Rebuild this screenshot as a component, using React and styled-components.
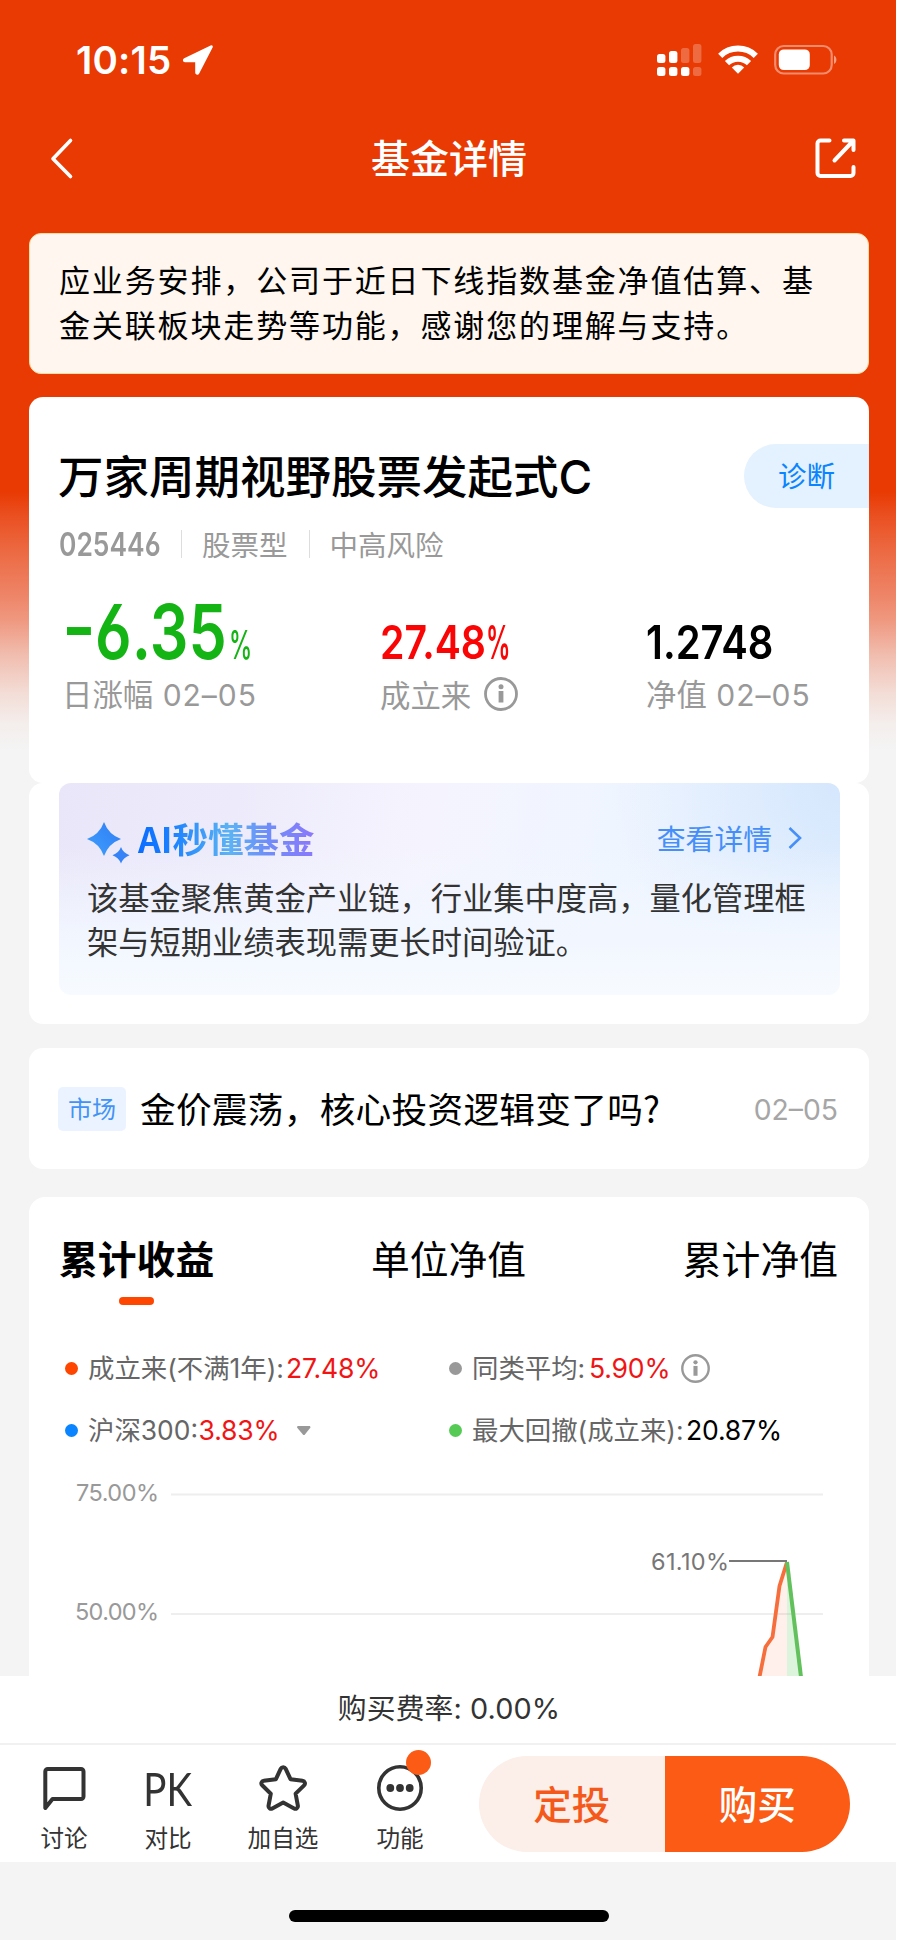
import React from "react";
import styled, { createGlobalStyle } from "styled-components";

const Global = createGlobalStyle`
  *, *::before, *::after { box-sizing: border-box; }
  html, body { margin: 0; padding: 0; background: #fff; }
  body { font-family: Inter, "Noto Sans CJK SC", sans-serif; color: #000; -webkit-font-smoothing: antialiased; }
  button { font: inherit; border: 0; padding: 0; background: none; color: inherit; }
  svg { display: block; flex: none; }
`;

const cjk = `"Noto Sans CJK SC", sans-serif`;

const Screen = styled.div`
  width: 896px;
  height: 1940px;
  overflow: hidden;
  display: flex;
  flex-direction: column;
  background: linear-gradient(
      to bottom,
      #e93a03 0, #e93a03 492px, #ea4f20 515px, #ec6a43 552px, #ee8568 596px,
      #ef9a82 622px, #f1beb0 656px, #f3dcd5 692px, #f4eeec 724px, #f4f4f4 750px
    ) #f4f4f4;
`;

const StatusBar = styled.div`
  height: 118px;
  flex: none;
  display: flex;
  justify-content: space-between;
  align-items: flex-start;
  padding: 44px 59px 0 76px;
`;
const Clock = styled.div`
  display: flex;
  align-items: center;
  gap: 11px;
  height: 32px;
  color: #fff;
  font-size: 38.5px;
  line-height: 32px;
  font-weight: 600;
  letter-spacing: 0.2px;
`;
const StatusIcons = styled.div`
  display: flex;
  gap: 16px;
`;

const NavBar = styled.header`
  height: 115px;
  flex: none;
  display: flex;
  justify-content: space-between;
  align-items: flex-start;
  padding: 18px 39px 0 49px;
  color: #fff;
`;
const NavTitle = styled.h1`
  margin: -2px 0 0 8px;
  font: 500 39px/44px ${cjk};
`;

const Notice = styled.p`
  margin: 0 27px 23px 29px;
  height: 141px;
  flex: none;
  padding: 22px 20px 0 29px;
  background: #fef6ef;
  border: 1px solid #fbdc9c;
  border-radius: 12px;
  font: 400 31px/45px ${cjk};
  letter-spacing: 1.86px;
  white-space: nowrap;
`;

const Card = styled.section`
  margin: 0 27px ${(p) => p.$gap || 0}px 29px;
  height: ${(p) => p.$h}px;
  flex: none;
  background: #fff;
  border-radius: ${(p) => p.$r || 14}px;
`;

const FundHead = styled.div`
  display: flex;
  justify-content: space-between;
  padding: 47px 0 0 29px;
`;
const FundName = styled.h2`
  margin: 0 0 3px;
  font: 500 45.5px/60px ${cjk};
  span { font-family: Inter, sans-serif; font-size: 46px; margin-left: 0; }
`;
const Diagnose = styled.button`
  width: 125px;
  height: 64px;
  padding-right: 0;
  border-radius: 32px 0 0 32px;
  background: #e4f1fe;
  color: #0a84ff;
  font: 400 28.5px/59px ${cjk};
  padding-bottom: 3px;
`;
const Meta = styled.div`
  display: flex;
  align-items: center;
  height: 36px;
  margin-top: 16px;
  padding-left: 30px;
  color: #999;
  font: 400 28.5px/36px ${cjk};
`;
const Rule = styled.i`
  width: 1px;
  height: 28px;
  background: #ddd;
  margin: 0 20px 0 ${(p) => p.$left}px;
`;

/* Condensed numerals: a fixed-width slot around horizontally narrowed digits. */
const NumSlot = styled.span`
  display: inline-block;
  width: ${(p) => p.$w}px;
  white-space: nowrap;
  line-height: 1;
`;
const NumText = styled.span`
  display: inline-block;
  transform: scaleX(${(p) => p.$x || 0.8});
  transform-origin: 0 50%;
  font-family: Inter, sans-serif;
  font-size: ${(p) => p.$size}px;
  font-weight: ${(p) => p.$weight || 600};
  line-height: 1;
  font-feature-settings: "cv03", "cv04", "case";
`;
const Minus = styled.span`
  display: inline-block;
  transform: scaleX(1.2);
  transform-origin: 0 50%;
  margin-right: 6px;
`;
const Num = ({ w, children, ...rest }) => (
  <NumSlot $w={w}>
    <NumText {...rest}>{children}</NumText>
  </NumSlot>
);

const Stats = styled.div`
  display: flex;
  padding-left: 33px;
  margin-top: 31px;
`;
const Stat = styled.div`
  width: ${(p) => p.$w}px;
  color: ${(p) => p.$c};
`;
const StatValue = styled.div`
  height: 81px;
  display: flex;
  align-items: baseline;
  &::before { content: ""; height: 66px; }
`;
const StatLabel = styled.div`
  display: flex;
  align-items: center;
  gap: 13px;
  height: 40px;
  color: #999;
  font-size: 30px;
  line-height: 40px;
  white-space: pre;
  letter-spacing: 1px;
  b { font: 400 30.4px/40px ${cjk}; letter-spacing: 0; }
`;

const AiBox = styled.div`
  margin: 0 29px 0 30px;
  height: 212px;
  padding: 33px 20px 0 28px;
  border-radius: 12px;
  background:
    linear-gradient(to bottom, rgba(246,250,255,0) 30%, #f2f7ff 75%, #f7fbff 100%),
    radial-gradient(circle at 100% 0, #d5e7fd 0, rgba(230,240,254,0) 230px),
    linear-gradient(100deg, #e9e6f9 0, #edebfb 22%, #f5f4fe 46%, #eff5ff 68%, #ebf3ff 100%);
`;
const AiHead = styled.div`
  display: flex;
  align-items: center;
  height: 44px;
`;
const Spark = styled.svg`
  width: 43px;
  height: 46px;
  margin-top: 6px;
`;
const AiTitle = styled.h3`
  margin: 0 0 0 8px;
  font: 700 35.5px/44px ${cjk};
  color: transparent;
  background: linear-gradient(90deg, #0a6cff 0, #1c83ff 20%, #5cb3f3 52%, #6f8df8 74%, #8b78fb 100%);
  background-clip: text;
  -webkit-background-clip: text;
`;
const AiMore = styled.span`
  display: flex;
  align-items: center;
  gap: 16px;
  margin-left: auto;
  margin-right: 17px;
  color: #468ff8;
  font: 400 28.8px/40px ${cjk};
`;
const AiText = styled.p`
  margin: 15px 0 0;
  color: #333;
  font: 400 31.25px/44px ${cjk};
  white-space: nowrap;
`;

const News = styled.div`
  height: 121px;
  display: flex;
  align-items: center;
  padding: 0 31px 0 29px;
`;
const Tag = styled.span`
  width: 68px;
  height: 44px;
  border-radius: 5px;
  background: #eaf3ff;
  color: #4393f5;
  text-align: center;
  font: 400 24px/42px ${cjk};
`;
const NewsTitle = styled.span`
  margin: -1px 0 0 14px;
  font: 400 35.7px/50px ${cjk};
  letter-spacing: 0.25px;
`;
const NewsDate = styled.span`
  margin: 3px 0 0 auto;
  color: #a6a6a6;
  font-size: 28.3px;
`;

const Tabs = styled.nav`
  display: flex;
  justify-content: space-between;
  padding: 33px 31px 0 30px;
`;
const Tab = styled.button`
  height: 77px;
  display: flex;
  flex-direction: column;
  align-items: center;
  font: ${(p) => (p.$on ? 700 : 400)} 38.8px/54px ${cjk};
  &::after {
    content: "";
    width: 35px;
    height: 8px;
    margin-top: 13px;
    border-radius: 4px;
    background: ${(p) => (p.$on ? "#ff4600" : "transparent")};
  }
`;
const Legend = styled.div`
  display: grid;
  grid-template-columns: 384px 1fr;
  grid-auto-rows: 62px;
  padding: 30px 0 0 36px;
`;
const LegendItem = styled.div`
  display: flex;
  align-items: center;
  white-space: nowrap;
`;
const Dot = styled.i`
  width: 13px;
  height: 13px;
  border-radius: 50%;
  background: ${(p) => p.$c};
  margin-right: 10px;
`;
const LegendLabel = styled.span`
  width: ${(p) => p.$w}px;
  color: #666;
  font: 400 26.4px/40px Inter, ${cjk};
`;
const LegendValue = styled.span`
  color: ${(p) => p.$c || "#f01414"};
  font-size: 26.6px;
  line-height: 40px;
  letter-spacing: -0.2px;
`;
const Caret = styled.svg`
  width: 14px;
  height: 10px;
  margin: 2px 0 0 18px;
`;
const InfoSlot = styled.span`
  margin-left: 11px;
`;
const Chart = styled.svg`
  width: 840px;
  height: 215px;
  text { font-family: Inter, sans-serif; font-size: 23.5px; }
`;

const Fee = styled.div`
  height: 67px;
  flex: none;
  display: flex;
  justify-content: center;
  padding: 12px 0 0 2px;
  background: #fff;
  color: #333;
  font: 400 28.8px/42px Inter, ${cjk};
  letter-spacing: 0.1px;
  white-space: pre;
`;
const ActionBar = styled.footer`
  height: 119px;
  flex: none;
  display: flex;
  padding: 13px 46px 0 23px;
  background: #fff;
  border-top: 2px solid #f1f1f2;
`;
const Tool = styled.button`
  width: ${(p) => p.$w}px;
  display: flex;
  flex-direction: column;
  align-items: center;
  justify-content: flex-start;
  height: 100px;
  color: #333;
  font: 400 23.6px/34px ${cjk};
`;
const ToolIcon = styled.span`
  position: relative;
  width: 50px;
  height: 62px;
  padding-top: 5px;
  display: flex;
  justify-content: center;
`;
const PkMark = styled.span`
  font: 400 47px/50px Lato, sans-serif;
  transform: scaleX(0.82);
`;
const Badge = styled.i`
  position: absolute;
  right: -6px;
  top: -8px;
  width: 25px;
  height: 25px;
  border-radius: 50%;
  background: #fb5b14;
`;
const BuyGroup = styled.div`
  display: flex;
  margin: -2px 0 0 auto;
  width: 371px;
  height: 96px;
  border-radius: 48px;
  overflow: hidden;
`;
const BuyButton = styled.button`
  flex: 1;
  padding-bottom: 4px;
  background: ${(p) => (p.$solid ? "#fb5b14" : "#fceee8")};
  color: ${(p) => (p.$solid ? "#fff" : "#f4581a")};
  font: 500 38.5px/92px ${cjk};
`;
const HomeArea = styled.div`
  flex: 1;
  display: flex;
  justify-content: center;
  padding: 48px 0 0 2px;
  background: #f4f4f4;
`;
const HomeBar = styled.i`
  width: 320px;
  height: 12px;
  border-radius: 6px;
  background: #000;
`;

const Info = ({ size }) => (
  <svg width={size} height={size} viewBox="0 0 34 34" fill="none" stroke="#999">
    <circle cx="17" cy="17" r="15.500" strokeWidth="2.800" />
    <path d="M17 14v11.500" strokeWidth="4.800" />
    <circle cx="17" cy="9.800" r="2.500" fill="#999" stroke="none" />
  </svg>
);

const signal = [
  [0, 10, 9, 1], [12, 7, 12, 1], [24, 4, 15, 0.25], [36, 0, 19, 0.25],
  [0, 23, 9, 1], [12, 23, 9, 1], [24, 23, 9, 1], [36, 23, 9, 0.25],
];

export default function App() {
  return (
    <>
      <Global />
      <Screen>
        <StatusBar>
          <Clock>
            10:15
            <svg width="32" height="32" viewBox="0 0 32 32">
              <path d="M28.600 1.400 2.200 14.200C.2 15.300.8 18.200 3 18.200H13.200V28.600C13.200 31 16.200 31.600 17.200 29.500L30.600 3.600C31.400 2 30.200.6 28.600 1.400Z" fill="#fff" />
            </svg>
          </Clock>
          <StatusIcons>
            <svg width="45" height="32" viewBox="0 0 45 32" fill="#fff">
              {signal.map(([x, y, h, o], i) => (
                <rect key={i} x={x} y={y} width="8.400" height={h} rx="2.500" opacity={o} />
              ))}
            </svg>
            <svg width="40" height="32" viewBox="0 0 40 32" fill="none" stroke="#fff" strokeWidth="6">
              <path d="M2.200 11.800a25.500 25.500 0 0 1 35.600 0" />
              <path d="M9 19.200a15.600 15.600 0 0 1 22 0" />
              <path d="M20 29.800l-6.200-6.400a8.800 8.800 0 0 1 12.400 0z" fill="#fff" stroke="none" />
            </svg>
            <svg width="63" height="32" viewBox="0 0 63 32">
              <rect x="1.200" y="2" width="56.500" height="27.500" rx="8.500" fill="none" stroke="#fff" strokeOpacity=".42" strokeWidth="2.200" />
              <rect x="4.800" y="5.400" width="31" height="20.700" rx="5" fill="#fff" />
              <path d="M60 11.500c3.200 1.500 3.200 7 0 8.500z" fill="#fff" fillOpacity=".5" />
            </svg>
          </StatusIcons>
        </StatusBar>

        <NavBar>
          <svg width="26" height="46" viewBox="0 0 26 46" fill="none" stroke="#fff" strokeWidth="3.600" strokeLinecap="round" strokeLinejoin="round">
            <path d="M21.500 4.500 4 22.700 21.500 40.500" />
          </svg>
          <NavTitle>基金详情</NavTitle>
          <svg width="42" height="46" viewBox="0 0 42 46" fill="none" stroke="#fff" strokeWidth="4" strokeLinecap="round" strokeLinejoin="round">
            <path d="M14.500 4.500H5.500a3 3 0 0 0-3 3V37a3 3 0 0 0 3 3H35.500a3 3 0 0 0 3-3V31" />
            <path d="M19.500 24.500 38 5M29 4.500H38.500V14" />
          </svg>
        </NavBar>

        <Notice>
          应业务安排，公司于近日下线指数基金净值估算、基
          <br />
          金关联板块走势等功能，感谢您的理解与支持。
        </Notice>

        <Card $h={386}>
          <FundHead>
            <FundName>万家周期视野股票发起式<span>C</span></FundName>
            <Diagnose>诊断</Diagnose>
          </FundHead>
          <Meta>
            <Num w={100} $size={33} $x={0.8}>025446</Num>
            <Rule $left={22} />
            股票型
            <Rule $left={21} />
            中高风险
          </Meta>
          <Stats>
            <Stat $w={318} $c="#14b414">
              <StatValue>
                <Num w={167} $size={76} $x={0.8}><Minus>-</Minus>6.35</Num>
                <Num w={24} $size={39} $x={0.6} $weight={500}>%</Num>
              </StatValue>
              <StatLabel><span><b>日涨幅</b> 02–05</span></StatLabel>
            </Stat>
            <Stat $w={266} $c="#fa0505">
              <StatValue>
                <Num w={106} $size={47} $x={0.835}>27.48</Num>
                <Num w={24} $size={47} $x={0.52}>%</Num>
              </StatValue>
              <StatLabel><b>成立来</b><Info size={34} /></StatLabel>
            </Stat>
            <Stat $w={180} $c="#000">
              <StatValue><Num w={128} $size={47} $x={0.85}>1.2748</Num></StatValue>
              <StatLabel><span><b>净值</b> 02–05</span></StatLabel>
            </Stat>
          </Stats>
        </Card>

        <Card $h={241} $gap={24}>
          <AiBox>
            <AiHead>
              <Spark viewBox="0 0 43 46">
                <defs>
                  <linearGradient id="spark" x1="1" y1="0" x2="0" y2="1">
                    <stop offset="0" stopColor="#2f7cf6" />
                    <stop offset="1" stopColor="#3fa0fb" />
                  </linearGradient>
                </defs>
                <path d="M17 4Q21.500 16.500 34 21Q21.500 25.500 17 38Q12.500 25.500 0 21Q12.500 16.500 17 4Z" fill="url(#spark)" />
                <path d="M34 29Q36.200 35 42.500 37.200Q36.200 39.500 34 45.500Q31.800 39.500 25.500 37.200Q31.800 35 34 29Z" fill="#3583f6" />
              </Spark>
              <AiTitle>AI秒懂基金</AiTitle>
              <AiMore>
                查看详情
                <svg width="15" height="24" viewBox="0 0 15 24" fill="none" stroke="#468ff8" strokeWidth="2.600">
                  <path d="M1.500 2 12 12 1.500 22" />
                </svg>
              </AiMore>
            </AiHead>
            <AiText>
              该基金聚焦黄金产业链，行业集中度高，量化管理框
              <br />
              架与短期业绩表现需更长时间验证。
            </AiText>
          </AiBox>
        </Card>

        <Card $h={121} $gap={28}>
          <News>
            <Tag>市场</Tag>
            <NewsTitle>金价震荡，核心投资逻辑变了吗?</NewsTitle>
            <NewsDate>02–05</NewsDate>
          </News>
        </Card>

        <Card $h={479} $r="16px 16px 0 0 / 16">
          <Tabs>
            <Tab $on>累计收益</Tab>
            <Tab>单位净值</Tab>
            <Tab>累计净值</Tab>
          </Tabs>
          <Legend>
            <LegendItem>
              <Dot $c="#ff4600" />
              <LegendLabel $w={198}>成立来(不满1年):</LegendLabel>
              <LegendValue>27.48%</LegendValue>
            </LegendItem>
            <LegendItem>
              <Dot $c="#999" />
              <LegendLabel $w={117}>同类平均:</LegendLabel>
              <LegendValue>5.90%</LegendValue>
              <InfoSlot><Info size={29} /></InfoSlot>
            </LegendItem>
            <LegendItem>
              <Dot $c="#0a84ff" />
              <LegendLabel $w={110.5}>沪深300:</LegendLabel>
              <LegendValue>3.83%</LegendValue>
              <Caret viewBox="18 0 14 10">
                <path d="M18.500 0H31L31.500 1.500 25.500 9H24.300L18 1.500Z" fill="#999" />
              </Caret>
            </LegendItem>
            <LegendItem>
              <Dot $c="#55cb55" />
              <LegendLabel $w={214}>最大回撤(成立来):</LegendLabel>
              <LegendValue $c="#000">20.87%</LegendValue>
            </LegendItem>
          </Legend>
          <Chart viewBox="29 1461 840 215">
            <path d="M171 1494.500H823M171 1614H823" stroke="#eee" strokeWidth="2" />
            <path d="M759.500 1677 765.500 1647 772.500 1637 779.500 1586 787 1562V1677Z" fill="#fa5a1e" fillOpacity=".09" />
            <path d="M787 1562 801 1677H787Z" fill="#50c850" fillOpacity=".2" />
            <path d="M759.500 1677 765.500 1647 772.500 1637 779.500 1586 787 1562" fill="none" stroke="#f56e3c" strokeWidth="3.800" strokeLinejoin="round" />
            <path d="M787 1562 801 1677" stroke="#62c15c" strokeWidth="4" />
            <path d="M729 1561H787" stroke="#777" strokeWidth="2" />
            <text x="76" y="1501" textLength="83" fill="#999">75.00%</text>
            <text x="75" y="1620" textLength="84" fill="#999">50.00%</text>
            <text x="651" y="1570" textLength="78" fill="#777">61.10%</text>
          </Chart>
        </Card>

        <Fee>购买费率: 0.00%</Fee>

        <ActionBar>
          <Tool $w={82}>
            <ToolIcon>
              <svg width="50" height="50" viewBox="0 0 50 50" fill="none" stroke="#333" strokeWidth="4" strokeLinejoin="round">
                <path d="M6.300 45V8.500a2.500 2.500 0 0 1 2.500-2.500H42a2.500 2.500 0 0 1 2.500 2.500V33.500a2.500 2.500 0 0 1-2.500 2.500H13.500L6.300 45Z" />
              </svg>
            </ToolIcon>
            讨论
          </Tool>
          <Tool $w={126}>
            <ToolIcon><PkMark>PK</PkMark></ToolIcon>
            对比
          </Tool>
          <Tool $w={104}>
            <ToolIcon>
              <svg width="50" height="50" viewBox="0 0 50 50" fill="none" stroke="#333" strokeWidth="4" strokeLinejoin="round">
                <path d="M22.800 5.600a2.700 2.700 0 0 1 4.800 0L32.500 16.200 44.600 17.800a2.600 2.600 0 0 1 1.500 4.500L37.600 30.700 39.900 42.900a2.600 2.600 0 0 1-3.800 2.600L25.200 39.600 14.300 45.500a2.600 2.600 0 0 1-3.800-2.600L12.800 30.700 4.200 22.300a2.600 2.600 0 0 1 1.500-4.500L17.900 16.200Z" />
              </svg>
            </ToolIcon>
            加自选
          </Tool>
          <Tool $w={130}>
            <ToolIcon>
              <svg width="50" height="50" viewBox="0 0 50 50">
                <circle cx="25" cy="25" r="21.200" fill="none" stroke="#333" strokeWidth="3.600" />
                <circle cx="15.300" cy="25" r="3.900" fill="#333" />
                <circle cx="25" cy="25" r="3.900" fill="#333" />
                <circle cx="34.700" cy="25" r="3.900" fill="#333" />
              </svg>
              <Badge />
            </ToolIcon>
            功能
          </Tool>
          <BuyGroup>
            <BuyButton>定投</BuyButton>
            <BuyButton $solid>购买</BuyButton>
          </BuyGroup>
        </ActionBar>
        <HomeArea><HomeBar /></HomeArea>
      </Screen>
    </>
  );
}
